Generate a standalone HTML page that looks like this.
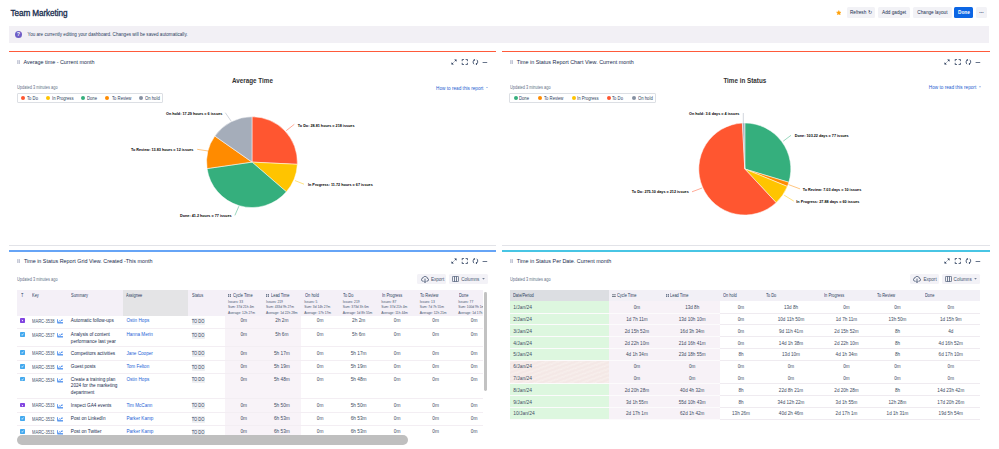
<!DOCTYPE html>
<html><head><meta charset="utf-8">
<style>
*{box-sizing:border-box}
html,body{margin:0;padding:0}
body{width:999px;height:449px;overflow:hidden;background:#fff;position:relative;font-family:"Liberation Sans",sans-serif;color:#172B4D}
.a{position:absolute;white-space:nowrap;line-height:1}
.r{position:absolute}
.btn{position:absolute;background:#F2F2F6;border-radius:1.5px;color:#172B4D;font-size:4.7px;line-height:11px;text-align:center}
.lg{position:absolute;border:0.6px solid #DCDFE4;border-radius:1px;height:9.8px;top:93px;background:#fff}
.lg span{position:absolute;top:2.5px;font-size:4.5px;line-height:1;color:#2C3E5D;transform:scaleX(0.934);transform-origin:0 0}
.dot{position:absolute;width:4.2px;height:4.2px;border-radius:50%;top:2.2px}
</style></head>
<body>
<div class="a" style="left:10.50px;top:10.00px;font-size:8.2px;color:#172B4D;font-weight:400;letter-spacing:-0.1px;-webkit-text-stroke:0.3px #172B4D">Team Marketing</div>
<svg class="a" style="left:835.7px;top:9.6px" width="5.6" height="5.6" viewBox="0 0 24 24"><path d="M12 2.5l2.9 6.2 6.8.8-5 4.7 1.3 6.7L12 17.6l-6 3.3 1.3-6.7-5-4.7 6.8-.8z" fill="#FFA20C" stroke="#FFA20C" stroke-width="2.2" stroke-linejoin="round"/></svg>
<div class="btn" style="left:846.5px;top:7px;width:28.5px;height:11px">Refresh &#x21bb;</div>
<div class="btn" style="left:877.7px;top:7px;width:32.8px;height:11px">Add gadget</div>
<div class="btn" style="left:913px;top:7px;width:38.8px;height:11px">Change layout</div>
<div class="btn" style="left:954.4px;top:7px;width:19.1px;height:11px;background:#0C66E4;color:#fff;font-weight:bold">Done</div>
<div class="btn" style="left:976.2px;top:7px;width:10.7px;height:11px;font-weight:bold">&middot;&middot;&middot;</div>
<div class="r" style="left:9px;top:26px;width:980px;height:17px;background:#F2F0F5"></div>
<div class="a" style="left:14.7px;top:30.6px;width:7.4px;height:7.4px;border-radius:50%;background:#6E5DC6;color:#fff;font-size:5.5px;font-weight:bold;text-align:center;line-height:7.6px">?</div>
<div class="a" style="left:27.50px;top:33.00px;font-size:4.6px;color:#2C3E5D;font-weight:400;">You are currently editing your dashboard. Changes will be saved automatically.</div>
<div class="r" style="left:9px;top:50.7px;width:487px;height:1.6px;background:#FF5A3A"></div>
<div class="r" style="left:502px;top:50.7px;width:488px;height:1.6px;background:#FF5A3A"></div>
<div class="r" style="left:9px;top:244.9px;width:487px;height:0.6px;background:#E2E3E8"></div>
<div class="r" style="left:502px;top:244.9px;width:488px;height:0.6px;background:#E2E3E8"></div>
<div class="r" style="left:9px;top:249.9px;width:487px;height:2px;background:#66A4F6"></div>
<div class="r" style="left:502px;top:249.9px;width:488px;height:2px;background:#48C5E4"></div>
<svg class="a" style="left:16.90px;top:59.70px" width="3.2" height="4.4" viewBox="0 0 3.2 4.4"><rect x="0" y="0" width="3.2" height="4.4" fill="#E3E4EC"/><rect x="0.3" y="0.2" width="0.9" height="4" fill="#BEC2D2"/><rect x="2" y="0.2" width="0.9" height="4" fill="#BEC2D2"/></svg>
<div class="a" style="left:23.50px;top:60.00px;font-size:5.4px;color:#172B4D;font-weight:400;">Average time - Current month</div>
<svg class="a" style="left:451.00px;top:59.00px" width="40" height="6" viewBox="0 0 40 6"><path d="M0.4,5.6 L0.6,3.2 L2.8,5.4 Z M5.6,0.4 L5.4,2.8 L3.2,0.6 Z" fill="#172B4D"/><path d="M1.6,4.4 L2.4,3.6 M3.6,2.4 L4.4,1.6" stroke="#172B4D" stroke-width="0.7" fill="none"/><g stroke="#172B4D" stroke-width="0.75" fill="none"><path d="M11.200000000000001,2.2 L11.200000000000001,0.4 L13.0,0.4 M14.600000000000001,0.4 L16.4,0.4 L16.4,2.2 M16.4,3.8 L16.4,5.6 L14.600000000000001,5.6 M13.0,5.6 L11.200000000000001,5.6 L11.200000000000001,3.8"/></g><g stroke="#172B4D" stroke-width="0.75" fill="none"><path d="M23.599999999999998,0.8 C21.799999999999997,1.2 21.599999999999998,4.2 23.0,5.2 M25.2,5.2 C27.0,4.8 27.2,1.8 25.799999999999997,0.8"/></g><path d="M22.799999999999997,0 L24.299999999999997,0.9 L22.799999999999997,1.9 Z M26.0,4.1 L24.5,5.1 L26.0,6 Z" fill="#172B4D"/><path d="M31.6,3.1 h4.6 v0.65 h-4.6 Z" fill="#172B4D"/></svg>
<div class="a" style="left:17.10px;top:86.00px;font-size:4.5px;color:#626F86;font-weight:400;;transform:scaleX(0.873);transform-origin:0 0">Updated 3 minutes ago</div>
<div class="lg" style="left:17px;width:145.8px">
  <i class="dot" style="left:2.9px;background:#FF5630"></i><span style="left:8.6px">To Do</span>
  <i class="dot" style="left:27.6px;background:#FFC400"></i><span style="left:34px">In Progress</span>
  <i class="dot" style="left:63px;background:#35AF7D"></i><span style="left:69.4px">Done</span>
  <i class="dot" style="left:87px;background:#FF8B00"></i><span style="left:93.5px">To Review</span>
  <i class="dot" style="left:120.9px;background:#8590A2"></i><span style="left:127.1px">On hold</span>
</div>
<div class="a" style="left:436.00px;top:87.00px;font-size:4.7px;color:#1D5DD0;font-weight:400;">How to read this report</div>
<svg class="a" style="left:486.2px;top:86.6px" width="2" height="1.6" viewBox="0 0 2 1.6"><path d="M0.2,0.3 L1,1.2 L1.8,0.3" fill="none" stroke="#1D5DD0" stroke-width="0.5"/></svg>
<div class="a" style="left:232.00px;top:78.00px;font-size:6.3px;color:#333;font-weight:bold;">Average Time</div>
<svg class="a" style="left:509.90px;top:59.70px" width="3.2" height="4.4" viewBox="0 0 3.2 4.4"><rect x="0" y="0" width="3.2" height="4.4" fill="#E3E4EC"/><rect x="0.3" y="0.2" width="0.9" height="4" fill="#BEC2D2"/><rect x="2" y="0.2" width="0.9" height="4" fill="#BEC2D2"/></svg>
<div class="a" style="left:516.80px;top:60.00px;font-size:5.4px;color:#172B4D;font-weight:400;">Time in Status Report Chart View. Current month</div>
<svg class="a" style="left:944.00px;top:59.00px" width="40" height="6" viewBox="0 0 40 6"><path d="M0.4,5.6 L0.6,3.2 L2.8,5.4 Z M5.6,0.4 L5.4,2.8 L3.2,0.6 Z" fill="#172B4D"/><path d="M1.6,4.4 L2.4,3.6 M3.6,2.4 L4.4,1.6" stroke="#172B4D" stroke-width="0.7" fill="none"/><g stroke="#172B4D" stroke-width="0.75" fill="none"><path d="M11.200000000000001,2.2 L11.200000000000001,0.4 L13.0,0.4 M14.600000000000001,0.4 L16.4,0.4 L16.4,2.2 M16.4,3.8 L16.4,5.6 L14.600000000000001,5.6 M13.0,5.6 L11.200000000000001,5.6 L11.200000000000001,3.8"/></g><g stroke="#172B4D" stroke-width="0.75" fill="none"><path d="M23.599999999999998,0.8 C21.799999999999997,1.2 21.599999999999998,4.2 23.0,5.2 M25.2,5.2 C27.0,4.8 27.2,1.8 25.799999999999997,0.8"/></g><path d="M22.799999999999997,0 L24.299999999999997,0.9 L22.799999999999997,1.9 Z M26.0,4.1 L24.5,5.1 L26.0,6 Z" fill="#172B4D"/><path d="M31.6,3.1 h4.6 v0.65 h-4.6 Z" fill="#172B4D"/></svg>
<div class="a" style="left:509.60px;top:86.00px;font-size:4.5px;color:#626F86;font-weight:400;;transform:scaleX(0.873);transform-origin:0 0">Updated 3 minutes ago</div>
<div class="lg" style="left:509.3px;width:146.5px">
  <i class="dot" style="left:3.5px;background:#35AF7D"></i><span style="left:9.2px">Done</span>
  <i class="dot" style="left:27.5px;background:#FF8B00"></i><span style="left:33.3px">To Review</span>
  <i class="dot" style="left:61.5px;background:#FFC400"></i><span style="left:67px">In Progress</span>
  <i class="dot" style="left:96.5px;background:#FF5630"></i><span style="left:102px">To Do</span>
  <i class="dot" style="left:121.9px;background:#8590A2"></i><span style="left:128px">On hold</span>
</div>
<div class="a" style="left:928.80px;top:86.00px;font-size:4.7px;color:#1D5DD0;font-weight:400;">How to read this report</div>
<svg class="a" style="left:979px;top:86.4px" width="2" height="1.6" viewBox="0 0 2 1.6"><path d="M0.2,0.3 L1,1.2 L1.8,0.3" fill="none" stroke="#1D5DD0" stroke-width="0.5"/></svg>
<div class="a" style="left:723.40px;top:78.00px;font-size:6.3px;color:#333;font-weight:bold;">Time in Status</div>
<svg class="a" style="left:0;top:0" width="999" height="449"><g stroke="#fff" stroke-width="0.5" stroke-linejoin="round">
<path d="M252.0,162.1 L252.00,116.70 A45.4,45.4 0 0 1 297.35,164.32 Z" fill="#FF5630"/>
<path d="M252.0,162.1 L297.35,164.32 A45.4,45.4 0 0 1 286.37,191.77 Z" fill="#FFC400"/>
<path d="M252.0,162.1 L286.37,191.77 A45.4,45.4 0 0 1 207.06,168.58 Z" fill="#35AF7D"/>
<path d="M252.0,162.1 L207.06,168.58 A45.4,45.4 0 0 1 214.81,136.06 Z" fill="#FF8B00"/>
<path d="M252.0,162.1 L214.81,136.06 A45.4,45.4 0 0 1 252.00,116.70 Z" fill="#A5ADBA"/>
<path d="M744.8,169 L744.80,123.00 A46,46 0 0 1 788.84,182.30 Z" fill="#35AF7D"/>
<path d="M744.8,169 L788.84,182.30 A46,46 0 0 1 787.36,186.45 Z" fill="#FF8B00"/>
<path d="M744.8,169 L787.36,186.45 A46,46 0 0 1 776.17,202.64 Z" fill="#FFC400"/>
<path d="M744.8,169 L776.17,202.64 A46,46 0 1 1 742.39,123.06 Z" fill="#FF5630"/>
<path d="M744.8,169 L742.39,123.06 A46,46 0 0 1 744.80,123.00 Z" fill="#A5ADBA"/>
</g><g fill="none" stroke-width="0.5">
<path d="M225.3,112.7 L231.2,121.2" stroke="#A5ADBA"/>
<path d="M294.3,124.3 L286.2,130.7" stroke="#FF5630"/>
<path d="M295,180.6 L304,184.2" stroke="#FFC400"/>
<path d="M234.9,215.4 L238.9,206.2" stroke="#35AF7D"/>
<path d="M197.2,149.3 L208.2,151" stroke="#FF8B00"/>
<path d="M743.3,113 L743.3,123.5" stroke="#A5ADBA"/>
<path d="M791,135.3 L783.2,141.2" stroke="#35AF7D"/>
<path d="M800.1,188.9 L788.5,184.6" stroke="#FF8B00"/>
<path d="M793.8,201.1 L784.2,195.2" stroke="#FFC400"/>
<path d="M692,191.8 L702.1,188" stroke="#FF5630"/>
</g></svg>
<div class="a" style="left:166.00px;top:113.00px;font-size:3.75px;color:#000;font-weight:bold;">On hold: 17.29 hours = 6 issues</div>
<div class="a" style="left:297.80px;top:125.00px;font-size:3.75px;color:#000;font-weight:bold;">To Do: 28.81 hours = 218 issues</div>
<div class="a" style="left:308.00px;top:184.00px;font-size:3.75px;color:#000;font-weight:bold;">In Progress: 11.72 hours = 67 issues</div>
<div class="a" style="left:180.00px;top:215.00px;font-size:3.75px;color:#000;font-weight:bold;">Done: 41.2 hours = 77 issues</div>
<div class="a" style="left:130.90px;top:149.00px;font-size:3.75px;color:#000;font-weight:bold;">To Review: 13.83 hours = 12 issues</div>
<div class="a" style="left:689.00px;top:113.00px;font-size:3.75px;color:#000;font-weight:bold;">On hold: 3.6 days = 4 issues</div>
<div class="a" style="left:794.80px;top:135.00px;font-size:3.75px;color:#000;font-weight:bold;">Done: 103.22 days = 77 issues</div>
<div class="a" style="left:802.70px;top:189.00px;font-size:3.75px;color:#000;font-weight:bold;">To Review: 7.03 days = 10 issues</div>
<div class="a" style="left:796.30px;top:201.00px;font-size:3.75px;color:#000;font-weight:bold;">In Progress: 27.88 days = 60 issues</div>
<div class="a" style="left:631.80px;top:191.00px;font-size:3.75px;color:#000;font-weight:bold;">To Do: 275.10 days = 212 issues</div>
<svg class="a" style="left:17.20px;top:259.00px" width="3.2" height="4.4" viewBox="0 0 3.2 4.4"><rect x="0" y="0" width="3.2" height="4.4" fill="#E3E4EC"/><rect x="0.3" y="0.2" width="0.9" height="4" fill="#BEC2D2"/><rect x="2" y="0.2" width="0.9" height="4" fill="#BEC2D2"/></svg>
<div class="a" style="left:23.90px;top:259.00px;font-size:5.4px;color:#172B4D;font-weight:400;">Time in Status Report Grid View. Created -This month</div>
<svg class="a" style="left:451.00px;top:258.10px" width="40" height="6" viewBox="0 0 40 6"><path d="M0.4,5.6 L0.6,3.2 L2.8,5.4 Z M5.6,0.4 L5.4,2.8 L3.2,0.6 Z" fill="#172B4D"/><path d="M1.6,4.4 L2.4,3.6 M3.6,2.4 L4.4,1.6" stroke="#172B4D" stroke-width="0.7" fill="none"/><g stroke="#172B4D" stroke-width="0.75" fill="none"><path d="M11.200000000000001,2.2 L11.200000000000001,0.4 L13.0,0.4 M14.600000000000001,0.4 L16.4,0.4 L16.4,2.2 M16.4,3.8 L16.4,5.6 L14.600000000000001,5.6 M13.0,5.6 L11.200000000000001,5.6 L11.200000000000001,3.8"/></g><g stroke="#172B4D" stroke-width="0.75" fill="none"><path d="M23.599999999999998,0.8 C21.799999999999997,1.2 21.599999999999998,4.2 23.0,5.2 M25.2,5.2 C27.0,4.8 27.2,1.8 25.799999999999997,0.8"/></g><path d="M22.799999999999997,0 L24.299999999999997,0.9 L22.799999999999997,1.9 Z M26.0,4.1 L24.5,5.1 L26.0,6 Z" fill="#172B4D"/><path d="M31.6,3.1 h4.6 v0.65 h-4.6 Z" fill="#172B4D"/></svg>
<div class="a" style="left:17.10px;top:278.00px;font-size:4.5px;color:#626F86;font-weight:400;;transform:scaleX(0.873);transform-origin:0 0">Updated 3 minutes ago</div>
<div class="r" style="left:417.3px;top:274px;width:28.7px;height:10.4px;background:#F3F2F7;border-radius:1.5px"></div><div class="r" style="left:449.3px;top:274px;width:38.4px;height:10.4px;background:#F3F2F7;border-radius:1.5px"></div><svg class="a" style="left:420.90px;top:275.80px" width="8" height="7" viewBox="0 0 8 7"><path d="M2.4,5.1 H1.9 C1,5.1 0.4,4.4 0.4,3.6 C0.4,2.8 1,2.1 1.9,2.1 C2.2,1 3,0.4 4.1,0.4 C5.3,0.4 6.2,1.2 6.3,2.3 C7.1,2.4 7.6,3 7.6,3.7 C7.6,4.5 7,5.1 6.2,5.1 H5.7" fill="none" stroke="#2C3E5D" stroke-width="0.75"/><path d="M4,2.6 V6.5 M2.9,5.4 L4,6.5 L5.1,5.4" fill="none" stroke="#2C3E5D" stroke-width="0.75"/></svg><div class="a" style="left:430.90px;top:278.00px;font-size:4.6px;color:#44546F;font-weight:400;">Export</div><svg class="a" style="left:452.10px;top:276.30px" width="7" height="6" viewBox="0 0 7 6"><rect x="0.4" y="0.4" width="6.2" height="5.2" rx="0.8" fill="none" stroke="#44546F" stroke-width="0.75"/><path d="M2.5,0.5 V5.5 M4.5,0.5 V5.5" stroke="#44546F" stroke-width="0.75"/></svg><div class="a" style="left:461.20px;top:278.00px;font-size:4.6px;color:#44546F;font-weight:400;">Columns</div><svg class="a" style="left:482.10px;top:278.00px" width="3" height="2" viewBox="0 0 3 2"><path d="M0.2,0.2 L1.5,1.6 L2.8,0.2 Z" fill="#44546F"/></svg>
<div class="r" style="left:17px;top:290px;width:465.8px;height:25.80000000000001px;background:#F4F0F7"></div>
<div class="r" style="left:123.3px;top:290px;width:65px;height:25.80000000000001px;background:#E4E4E6"></div>
<div class="r" style="left:224.7px;top:315.8px;width:76.2px;height:124.19999999999999px;background:#F8F3F8"></div>
<div class="r" style="left:17px;top:328.10px;width:465.8px;height:0.7px;background:#F3EEF3"></div>
<div class="r" style="left:17px;top:346.00px;width:465.8px;height:0.7px;background:#F3EEF3"></div>
<div class="r" style="left:17px;top:359.80px;width:465.8px;height:0.7px;background:#F3EEF3"></div>
<div class="r" style="left:17px;top:373.20px;width:465.8px;height:0.7px;background:#F3EEF3"></div>
<div class="r" style="left:17px;top:398.10px;width:465.8px;height:0.7px;background:#F3EEF3"></div>
<div class="r" style="left:17px;top:412.20px;width:465.8px;height:0.7px;background:#F3EEF3"></div>
<div class="r" style="left:17px;top:425.20px;width:465.8px;height:0.7px;background:#F3EEF3"></div>
<div class="a" style="left:21.00px;top:294.00px;font-size:4.5px;color:#2C3E5D;font-weight:400;;transform:scaleX(0.88);transform-origin:0 0">T</div>
<div class="a" style="left:32.10px;top:294.00px;font-size:4.5px;color:#2C3E5D;font-weight:400;;transform:scaleX(0.88);transform-origin:0 0">Key</div>
<div class="a" style="left:70.90px;top:294.00px;font-size:4.5px;color:#2C3E5D;font-weight:400;;transform:scaleX(0.88);transform-origin:0 0">Summary</div>
<div class="a" style="left:126.40px;top:294.00px;font-size:4.5px;color:#2C3E5D;font-weight:400;;transform:scaleX(0.88);transform-origin:0 0">Assignee</div>
<div class="a" style="left:191.50px;top:294.00px;font-size:4.5px;color:#2C3E5D;font-weight:400;;transform:scaleX(0.88);transform-origin:0 0">Status</div>
<svg class="a" style="left:228.00px;top:293.70px" width="3.4" height="3" viewBox="0 0 3.4 3"><path d="M0,0.2 h1.3 v1.1 h-1.3 Z M2,0.2 h1.3 v1.1 h-1.3 Z M0,1.7 h1.3 v1.1 h-1.3 Z M2,1.7 h1.3 v1.1 h-1.3 Z" fill="#44546F"/></svg>
<div class="a" style="left:232.50px;top:294.00px;font-size:4.5px;color:#2C3E5D;font-weight:400;;transform:scaleX(0.88);transform-origin:0 0">Cycle Time</div>
<div class="a" style="left:228.00px;top:301.00px;font-size:3.3px;color:#44546F;font-weight:400;">Issues: 33</div>
<div class="a" style="left:228.00px;top:306.00px;font-size:3.3px;color:#44546F;font-weight:400;">Sum: 37d 21h 4m</div>
<div class="a" style="left:228.00px;top:312.00px;font-size:3.3px;color:#44546F;font-weight:400;">Average: 12h 27m</div>
<svg class="a" style="left:266.10px;top:293.70px" width="3.4" height="3" viewBox="0 0 3.4 3"><path d="M0,0.2 h1.3 v1.1 h-1.3 Z M2,0.2 h1.3 v1.1 h-1.3 Z M0,1.7 h1.3 v1.1 h-1.3 Z M2,1.7 h1.3 v1.1 h-1.3 Z" fill="#44546F"/></svg>
<div class="a" style="left:270.60px;top:294.00px;font-size:4.5px;color:#2C3E5D;font-weight:400;;transform:scaleX(0.88);transform-origin:0 0">Lead Time</div>
<div class="a" style="left:266.10px;top:301.00px;font-size:3.3px;color:#44546F;font-weight:400;">Issues: 219</div>
<div class="a" style="left:266.10px;top:306.00px;font-size:3.3px;color:#44546F;font-weight:400;">Sum: 433d 9h 27m</div>
<div class="a" style="left:266.10px;top:312.00px;font-size:3.3px;color:#44546F;font-weight:400;">Average: 1d 22h 28m</div>
<div class="a" style="left:304.90px;top:294.00px;font-size:4.5px;color:#2C3E5D;font-weight:400;;transform:scaleX(0.88);transform-origin:0 0">On hold</div>
<div class="a" style="left:304.20px;top:301.00px;font-size:3.3px;color:#44546F;font-weight:400;">Issues: 5</div>
<div class="a" style="left:304.20px;top:306.00px;font-size:3.3px;color:#44546F;font-weight:400;">Sum: 3d 14h 27m</div>
<div class="a" style="left:304.20px;top:312.00px;font-size:3.3px;color:#44546F;font-weight:400;">Average: 17h 17m</div>
<div class="a" style="left:343.40px;top:294.00px;font-size:4.5px;color:#2C3E5D;font-weight:400;;transform:scaleX(0.88);transform-origin:0 0">To Do</div>
<div class="a" style="left:342.70px;top:301.00px;font-size:3.3px;color:#44546F;font-weight:400;">Issues: 219</div>
<div class="a" style="left:342.70px;top:306.00px;font-size:3.3px;color:#44546F;font-weight:400;">Sum: 373d 3h 6m</div>
<div class="a" style="left:342.70px;top:312.00px;font-size:3.3px;color:#44546F;font-weight:400;">Average: 1d 8h 55m</div>
<div class="a" style="left:381.90px;top:294.00px;font-size:4.5px;color:#2C3E5D;font-weight:400;;transform:scaleX(0.88);transform-origin:0 0">In Progress</div>
<div class="a" style="left:381.20px;top:301.00px;font-size:3.3px;color:#44546F;font-weight:400;">Issues: 87</div>
<div class="a" style="left:381.20px;top:306.00px;font-size:3.3px;color:#44546F;font-weight:400;">Sum: 37d 21h 4m</div>
<div class="a" style="left:381.20px;top:312.00px;font-size:3.3px;color:#44546F;font-weight:400;">Average: 11h 44m</div>
<div class="a" style="left:420.40px;top:294.00px;font-size:4.5px;color:#2C3E5D;font-weight:400;;transform:scaleX(0.88);transform-origin:0 0">To Review</div>
<div class="a" style="left:419.70px;top:301.00px;font-size:3.3px;color:#44546F;font-weight:400;">Issues: 13</div>
<div class="a" style="left:419.70px;top:306.00px;font-size:3.3px;color:#44546F;font-weight:400;">Sum: 7d 7h 55m</div>
<div class="a" style="left:419.70px;top:312.00px;font-size:3.3px;color:#44546F;font-weight:400;">Average: 12h 21m</div>
<div class="a" style="left:458.90px;top:294.00px;font-size:4.5px;color:#2C3E5D;font-weight:400;;transform:scaleX(0.88);transform-origin:0 0">Done</div>
<div class="a" style="left:458.20px;top:301.00px;font-size:3.3px;color:#44546F;font-weight:400;">Issues: 77</div>
<div class="a" style="left:458.20px;top:306.00px;font-size:3.3px;color:#44546F;font-weight:400;">Sum: 100d 9h 1m</div>
<div class="a" style="left:458.20px;top:312.00px;font-size:3.3px;color:#44546F;font-weight:400;">Average: 1d 17h 3m</div>
<div class="r" style="left:20.3px;top:317.90px;width:4.8px;height:4.8px;border-radius:0.8px;background:#8043E0"></div>
<svg class="a" style="left:20.3px;top:317.90px" width="4.8" height="4.8" viewBox="0 0 4.8 4.8"><path d="M1.7,1.4 L3.2,2.6 L2.2,3.4 Z" fill="#fff"/></svg>
<div class="a" style="left:32.20px;top:320.00px;font-size:4.6px;color:#44546F;font-weight:400;;transform:scaleX(0.89);transform-origin:0 0">MARC-3538</div>
<svg class="a" style="left:57px;top:318.90px" width="6.2" height="5" viewBox="0 0 6.2 5"><path d="M0.4,0.2 V3.6 H6" fill="none" stroke="#1D6FE8" stroke-width="0.75"/><path d="M0.4,4.5 H6" fill="none" stroke="#5E9CF0" stroke-width="0.5"/><path d="M1.4,2.9 L2.8,1.7 L3.7,2.2 L5.1,1" fill="none" stroke="#1D6FE8" stroke-width="0.7"/><path d="M4.2,0.7 L5.7,0.4 L5.4,1.9 Z" fill="#1D6FE8"/></svg>
<div class="a" style="left:70.80px;top:319.00px;font-size:4.68px;color:#172B4D;font-weight:400;">Automatic follow-ups</div>
<div class="a" style="left:126.40px;top:319.00px;font-size:4.63px;color:#1D5FD6;font-weight:400;">Ostin Hops</div>
<div class="r" style="left:191.5px;top:317.80px;width:13.1px;height:6.9px;background:#EEEFF2;border-radius:0.8px"></div>
<div class="a" style="left:148.05px;width:100px;text-align:center;top:320.00px;font-size:4.7px;color:#2C3E5D;font-weight:400;;transform:scaleX(0.86);transform-origin:50% 0">TO DO</div>
<div class="a" style="left:193.75px;width:100px;text-align:center;top:319.00px;font-size:4.75px;color:#3D4B63;font-weight:400;">0m</div>
<div class="a" style="left:231.85px;width:100px;text-align:center;top:319.00px;font-size:4.75px;color:#3D4B63;font-weight:400;">2h 2m</div>
<div class="a" style="left:270.15px;width:100px;text-align:center;top:319.00px;font-size:4.75px;color:#3D4B63;font-weight:400;">0m</div>
<div class="a" style="left:308.65px;width:100px;text-align:center;top:319.00px;font-size:4.75px;color:#3D4B63;font-weight:400;">2h 2m</div>
<div class="a" style="left:347.15px;width:100px;text-align:center;top:319.00px;font-size:4.75px;color:#3D4B63;font-weight:400;">0m</div>
<div class="a" style="left:385.65px;width:100px;text-align:center;top:319.00px;font-size:4.75px;color:#3D4B63;font-weight:400;">0m</div>
<div class="a" style="left:424.15px;width:100px;text-align:center;top:319.00px;font-size:4.75px;color:#3D4B63;font-weight:400;">0m</div>
<div class="r" style="left:20.3px;top:332.10px;width:4.8px;height:4.8px;border-radius:0.8px;background:#42A8EE"></div>
<svg class="a" style="left:20.3px;top:332.10px" width="4.8" height="4.8" viewBox="0 0 4.8 4.8"><path d="M1.4,2.6 L2.1,3.3 L3.5,1.6" fill="none" stroke="#fff" stroke-width="0.7"/></svg>
<div class="a" style="left:32.20px;top:334.00px;font-size:4.6px;color:#44546F;font-weight:400;;transform:scaleX(0.89);transform-origin:0 0">MARC-3537</div>
<svg class="a" style="left:57px;top:333.10px" width="6.2" height="5" viewBox="0 0 6.2 5"><path d="M0.4,0.2 V3.6 H6" fill="none" stroke="#1D6FE8" stroke-width="0.75"/><path d="M0.4,4.5 H6" fill="none" stroke="#5E9CF0" stroke-width="0.5"/><path d="M1.4,2.9 L2.8,1.7 L3.7,2.2 L5.1,1" fill="none" stroke="#1D6FE8" stroke-width="0.7"/><path d="M4.2,0.7 L5.7,0.4 L5.4,1.9 Z" fill="#1D6FE8"/></svg>
<div class="a" style="left:70.80px;top:333.00px;font-size:4.68px;color:#172B4D;font-weight:400;">Analysis of content</div>
<div class="a" style="left:70.80px;top:340.00px;font-size:4.68px;color:#172B4D;font-weight:400;">performance last year</div>
<div class="a" style="left:126.40px;top:333.00px;font-size:4.63px;color:#1D5FD6;font-weight:400;">Hanna Merin</div>
<div class="r" style="left:191.5px;top:332.00px;width:13.1px;height:6.9px;background:#EEEFF2;border-radius:0.8px"></div>
<div class="a" style="left:148.05px;width:100px;text-align:center;top:334.00px;font-size:4.7px;color:#2C3E5D;font-weight:400;;transform:scaleX(0.86);transform-origin:50% 0">TO DO</div>
<div class="a" style="left:193.75px;width:100px;text-align:center;top:333.00px;font-size:4.75px;color:#3D4B63;font-weight:400;">0m</div>
<div class="a" style="left:231.85px;width:100px;text-align:center;top:333.00px;font-size:4.75px;color:#3D4B63;font-weight:400;">5h 6m</div>
<div class="a" style="left:270.15px;width:100px;text-align:center;top:333.00px;font-size:4.75px;color:#3D4B63;font-weight:400;">0m</div>
<div class="a" style="left:308.65px;width:100px;text-align:center;top:333.00px;font-size:4.75px;color:#3D4B63;font-weight:400;">5h 6m</div>
<div class="a" style="left:347.15px;width:100px;text-align:center;top:333.00px;font-size:4.75px;color:#3D4B63;font-weight:400;">0m</div>
<div class="a" style="left:385.65px;width:100px;text-align:center;top:333.00px;font-size:4.75px;color:#3D4B63;font-weight:400;">0m</div>
<div class="a" style="left:424.15px;width:100px;text-align:center;top:333.00px;font-size:4.75px;color:#3D4B63;font-weight:400;">0m</div>
<div class="r" style="left:20.3px;top:350.30px;width:4.8px;height:4.8px;border-radius:0.8px;background:#42A8EE"></div>
<svg class="a" style="left:20.3px;top:350.30px" width="4.8" height="4.8" viewBox="0 0 4.8 4.8"><path d="M1.4,2.6 L2.1,3.3 L3.5,1.6" fill="none" stroke="#fff" stroke-width="0.7"/></svg>
<div class="a" style="left:32.20px;top:352.00px;font-size:4.6px;color:#44546F;font-weight:400;;transform:scaleX(0.89);transform-origin:0 0">MARC-3536</div>
<svg class="a" style="left:57px;top:351.30px" width="6.2" height="5" viewBox="0 0 6.2 5"><path d="M0.4,0.2 V3.6 H6" fill="none" stroke="#1D6FE8" stroke-width="0.75"/><path d="M0.4,4.5 H6" fill="none" stroke="#5E9CF0" stroke-width="0.5"/><path d="M1.4,2.9 L2.8,1.7 L3.7,2.2 L5.1,1" fill="none" stroke="#1D6FE8" stroke-width="0.7"/><path d="M4.2,0.7 L5.7,0.4 L5.4,1.9 Z" fill="#1D6FE8"/></svg>
<div class="a" style="left:70.80px;top:352.00px;font-size:4.68px;color:#172B4D;font-weight:400;">Competitors activities</div>
<div class="a" style="left:126.40px;top:352.00px;font-size:4.63px;color:#1D5FD6;font-weight:400;">Jane Cooper</div>
<div class="r" style="left:191.5px;top:350.20px;width:13.1px;height:6.9px;background:#EEEFF2;border-radius:0.8px"></div>
<div class="a" style="left:148.05px;width:100px;text-align:center;top:352.00px;font-size:4.7px;color:#2C3E5D;font-weight:400;;transform:scaleX(0.86);transform-origin:50% 0">TO DO</div>
<div class="a" style="left:193.75px;width:100px;text-align:center;top:352.00px;font-size:4.75px;color:#3D4B63;font-weight:400;">0m</div>
<div class="a" style="left:231.85px;width:100px;text-align:center;top:352.00px;font-size:4.75px;color:#3D4B63;font-weight:400;">5h 17m</div>
<div class="a" style="left:270.15px;width:100px;text-align:center;top:352.00px;font-size:4.75px;color:#3D4B63;font-weight:400;">0m</div>
<div class="a" style="left:308.65px;width:100px;text-align:center;top:352.00px;font-size:4.75px;color:#3D4B63;font-weight:400;">5h 17m</div>
<div class="a" style="left:347.15px;width:100px;text-align:center;top:352.00px;font-size:4.75px;color:#3D4B63;font-weight:400;">0m</div>
<div class="a" style="left:385.65px;width:100px;text-align:center;top:352.00px;font-size:4.75px;color:#3D4B63;font-weight:400;">0m</div>
<div class="a" style="left:424.15px;width:100px;text-align:center;top:352.00px;font-size:4.75px;color:#3D4B63;font-weight:400;">0m</div>
<div class="r" style="left:20.3px;top:363.90px;width:4.8px;height:4.8px;border-radius:0.8px;background:#42A8EE"></div>
<svg class="a" style="left:20.3px;top:363.90px" width="4.8" height="4.8" viewBox="0 0 4.8 4.8"><path d="M1.4,2.6 L2.1,3.3 L3.5,1.6" fill="none" stroke="#fff" stroke-width="0.7"/></svg>
<div class="a" style="left:32.20px;top:366.00px;font-size:4.6px;color:#44546F;font-weight:400;;transform:scaleX(0.89);transform-origin:0 0">MARC-3535</div>
<svg class="a" style="left:57px;top:364.90px" width="6.2" height="5" viewBox="0 0 6.2 5"><path d="M0.4,0.2 V3.6 H6" fill="none" stroke="#1D6FE8" stroke-width="0.75"/><path d="M0.4,4.5 H6" fill="none" stroke="#5E9CF0" stroke-width="0.5"/><path d="M1.4,2.9 L2.8,1.7 L3.7,2.2 L5.1,1" fill="none" stroke="#1D6FE8" stroke-width="0.7"/><path d="M4.2,0.7 L5.7,0.4 L5.4,1.9 Z" fill="#1D6FE8"/></svg>
<div class="a" style="left:70.80px;top:365.00px;font-size:4.68px;color:#172B4D;font-weight:400;">Guest posts</div>
<div class="a" style="left:126.40px;top:365.00px;font-size:4.63px;color:#1D5FD6;font-weight:400;">Tom Felton</div>
<div class="r" style="left:191.5px;top:363.80px;width:13.1px;height:6.9px;background:#EEEFF2;border-radius:0.8px"></div>
<div class="a" style="left:148.05px;width:100px;text-align:center;top:366.00px;font-size:4.7px;color:#2C3E5D;font-weight:400;;transform:scaleX(0.86);transform-origin:50% 0">TO DO</div>
<div class="a" style="left:193.75px;width:100px;text-align:center;top:365.00px;font-size:4.75px;color:#3D4B63;font-weight:400;">0m</div>
<div class="a" style="left:231.85px;width:100px;text-align:center;top:365.00px;font-size:4.75px;color:#3D4B63;font-weight:400;">5h 19m</div>
<div class="a" style="left:270.15px;width:100px;text-align:center;top:365.00px;font-size:4.75px;color:#3D4B63;font-weight:400;">0m</div>
<div class="a" style="left:308.65px;width:100px;text-align:center;top:365.00px;font-size:4.75px;color:#3D4B63;font-weight:400;">5h 19m</div>
<div class="a" style="left:347.15px;width:100px;text-align:center;top:365.00px;font-size:4.75px;color:#3D4B63;font-weight:400;">0m</div>
<div class="a" style="left:385.65px;width:100px;text-align:center;top:365.00px;font-size:4.75px;color:#3D4B63;font-weight:400;">0m</div>
<div class="a" style="left:424.15px;width:100px;text-align:center;top:365.00px;font-size:4.75px;color:#3D4B63;font-weight:400;">0m</div>
<div class="r" style="left:20.3px;top:376.70px;width:4.8px;height:4.8px;border-radius:0.8px;background:#42A8EE"></div>
<svg class="a" style="left:20.3px;top:376.70px" width="4.8" height="4.8" viewBox="0 0 4.8 4.8"><path d="M1.4,2.6 L2.1,3.3 L3.5,1.6" fill="none" stroke="#fff" stroke-width="0.7"/></svg>
<div class="a" style="left:32.20px;top:379.00px;font-size:4.6px;color:#44546F;font-weight:400;;transform:scaleX(0.89);transform-origin:0 0">MARC-3534</div>
<svg class="a" style="left:57px;top:377.70px" width="6.2" height="5" viewBox="0 0 6.2 5"><path d="M0.4,0.2 V3.6 H6" fill="none" stroke="#1D6FE8" stroke-width="0.75"/><path d="M0.4,4.5 H6" fill="none" stroke="#5E9CF0" stroke-width="0.5"/><path d="M1.4,2.9 L2.8,1.7 L3.7,2.2 L5.1,1" fill="none" stroke="#1D6FE8" stroke-width="0.7"/><path d="M4.2,0.7 L5.7,0.4 L5.4,1.9 Z" fill="#1D6FE8"/></svg>
<div class="a" style="left:70.80px;top:378.00px;font-size:4.68px;color:#172B4D;font-weight:400;">Create a training plan</div>
<div class="a" style="left:70.80px;top:384.00px;font-size:4.68px;color:#172B4D;font-weight:400;">2024 for the marketing</div>
<div class="a" style="left:70.80px;top:391.00px;font-size:4.68px;color:#172B4D;font-weight:400;">department</div>
<div class="a" style="left:126.40px;top:378.00px;font-size:4.63px;color:#1D5FD6;font-weight:400;">Ostin Hops</div>
<div class="r" style="left:191.5px;top:376.60px;width:13.1px;height:6.9px;background:#EEEFF2;border-radius:0.8px"></div>
<div class="a" style="left:148.05px;width:100px;text-align:center;top:378.00px;font-size:4.7px;color:#2C3E5D;font-weight:400;;transform:scaleX(0.86);transform-origin:50% 0">TO DO</div>
<div class="a" style="left:193.75px;width:100px;text-align:center;top:378.00px;font-size:4.75px;color:#3D4B63;font-weight:400;">0m</div>
<div class="a" style="left:231.85px;width:100px;text-align:center;top:378.00px;font-size:4.75px;color:#3D4B63;font-weight:400;">5h 48m</div>
<div class="a" style="left:270.15px;width:100px;text-align:center;top:378.00px;font-size:4.75px;color:#3D4B63;font-weight:400;">0m</div>
<div class="a" style="left:308.65px;width:100px;text-align:center;top:378.00px;font-size:4.75px;color:#3D4B63;font-weight:400;">5h 48m</div>
<div class="a" style="left:347.15px;width:100px;text-align:center;top:378.00px;font-size:4.75px;color:#3D4B63;font-weight:400;">0m</div>
<div class="a" style="left:385.65px;width:100px;text-align:center;top:378.00px;font-size:4.75px;color:#3D4B63;font-weight:400;">0m</div>
<div class="a" style="left:424.15px;width:100px;text-align:center;top:378.00px;font-size:4.75px;color:#3D4B63;font-weight:400;">0m</div>
<div class="r" style="left:20.3px;top:402.50px;width:4.8px;height:4.8px;border-radius:0.8px;background:#8043E0"></div>
<svg class="a" style="left:20.3px;top:402.50px" width="4.8" height="4.8" viewBox="0 0 4.8 4.8"><path d="M1.7,1.4 L3.2,2.6 L2.2,3.4 Z" fill="#fff"/></svg>
<div class="a" style="left:32.20px;top:404.00px;font-size:4.6px;color:#44546F;font-weight:400;;transform:scaleX(0.89);transform-origin:0 0">MARC-3533</div>
<svg class="a" style="left:57px;top:403.50px" width="6.2" height="5" viewBox="0 0 6.2 5"><path d="M0.4,0.2 V3.6 H6" fill="none" stroke="#1D6FE8" stroke-width="0.75"/><path d="M0.4,4.5 H6" fill="none" stroke="#5E9CF0" stroke-width="0.5"/><path d="M1.4,2.9 L2.8,1.7 L3.7,2.2 L5.1,1" fill="none" stroke="#1D6FE8" stroke-width="0.7"/><path d="M4.2,0.7 L5.7,0.4 L5.4,1.9 Z" fill="#1D6FE8"/></svg>
<div class="a" style="left:70.80px;top:404.00px;font-size:4.68px;color:#172B4D;font-weight:400;">Inspect GA4 events</div>
<div class="a" style="left:126.40px;top:404.00px;font-size:4.63px;color:#1D5FD6;font-weight:400;">Tim McCann</div>
<div class="r" style="left:191.5px;top:402.40px;width:13.1px;height:6.9px;background:#EEEFF2;border-radius:0.8px"></div>
<div class="a" style="left:148.05px;width:100px;text-align:center;top:404.00px;font-size:4.7px;color:#2C3E5D;font-weight:400;;transform:scaleX(0.86);transform-origin:50% 0">TO DO</div>
<div class="a" style="left:193.75px;width:100px;text-align:center;top:404.00px;font-size:4.75px;color:#3D4B63;font-weight:400;">0m</div>
<div class="a" style="left:231.85px;width:100px;text-align:center;top:404.00px;font-size:4.75px;color:#3D4B63;font-weight:400;">5h 50m</div>
<div class="a" style="left:270.15px;width:100px;text-align:center;top:404.00px;font-size:4.75px;color:#3D4B63;font-weight:400;">0m</div>
<div class="a" style="left:308.65px;width:100px;text-align:center;top:404.00px;font-size:4.75px;color:#3D4B63;font-weight:400;">5h 50m</div>
<div class="a" style="left:347.15px;width:100px;text-align:center;top:404.00px;font-size:4.75px;color:#3D4B63;font-weight:400;">0m</div>
<div class="a" style="left:385.65px;width:100px;text-align:center;top:404.00px;font-size:4.75px;color:#3D4B63;font-weight:400;">0m</div>
<div class="a" style="left:424.15px;width:100px;text-align:center;top:404.00px;font-size:4.75px;color:#3D4B63;font-weight:400;">0m</div>
<div class="r" style="left:20.3px;top:415.80px;width:4.8px;height:4.8px;border-radius:0.8px;background:#42A8EE"></div>
<svg class="a" style="left:20.3px;top:415.80px" width="4.8" height="4.8" viewBox="0 0 4.8 4.8"><path d="M1.4,2.6 L2.1,3.3 L3.5,1.6" fill="none" stroke="#fff" stroke-width="0.7"/></svg>
<div class="a" style="left:32.20px;top:418.00px;font-size:4.6px;color:#44546F;font-weight:400;;transform:scaleX(0.89);transform-origin:0 0">MARC-3532</div>
<svg class="a" style="left:57px;top:416.80px" width="6.2" height="5" viewBox="0 0 6.2 5"><path d="M0.4,0.2 V3.6 H6" fill="none" stroke="#1D6FE8" stroke-width="0.75"/><path d="M0.4,4.5 H6" fill="none" stroke="#5E9CF0" stroke-width="0.5"/><path d="M1.4,2.9 L2.8,1.7 L3.7,2.2 L5.1,1" fill="none" stroke="#1D6FE8" stroke-width="0.7"/><path d="M4.2,0.7 L5.7,0.4 L5.4,1.9 Z" fill="#1D6FE8"/></svg>
<div class="a" style="left:70.80px;top:417.00px;font-size:4.68px;color:#172B4D;font-weight:400;">Post on LinkedIn</div>
<div class="a" style="left:126.40px;top:417.00px;font-size:4.63px;color:#1D5FD6;font-weight:400;">Parker Kamp</div>
<div class="r" style="left:191.5px;top:415.70px;width:13.1px;height:6.9px;background:#EEEFF2;border-radius:0.8px"></div>
<div class="a" style="left:148.05px;width:100px;text-align:center;top:418.00px;font-size:4.7px;color:#2C3E5D;font-weight:400;;transform:scaleX(0.86);transform-origin:50% 0">TO DO</div>
<div class="a" style="left:193.75px;width:100px;text-align:center;top:417.00px;font-size:4.75px;color:#3D4B63;font-weight:400;">0m</div>
<div class="a" style="left:231.85px;width:100px;text-align:center;top:417.00px;font-size:4.75px;color:#3D4B63;font-weight:400;">6h 53m</div>
<div class="a" style="left:270.15px;width:100px;text-align:center;top:417.00px;font-size:4.75px;color:#3D4B63;font-weight:400;">0m</div>
<div class="a" style="left:308.65px;width:100px;text-align:center;top:417.00px;font-size:4.75px;color:#3D4B63;font-weight:400;">6h 53m</div>
<div class="a" style="left:347.15px;width:100px;text-align:center;top:417.00px;font-size:4.75px;color:#3D4B63;font-weight:400;">0m</div>
<div class="a" style="left:385.65px;width:100px;text-align:center;top:417.00px;font-size:4.75px;color:#3D4B63;font-weight:400;">0m</div>
<div class="a" style="left:424.15px;width:100px;text-align:center;top:417.00px;font-size:4.75px;color:#3D4B63;font-weight:400;">0m</div>
<div class="r" style="left:20.3px;top:429.10px;width:4.8px;height:4.8px;border-radius:0.8px;background:#42A8EE"></div>
<svg class="a" style="left:20.3px;top:429.10px" width="4.8" height="4.8" viewBox="0 0 4.8 4.8"><path d="M1.4,2.6 L2.1,3.3 L3.5,1.6" fill="none" stroke="#fff" stroke-width="0.7"/></svg>
<div class="a" style="left:32.20px;top:431.00px;font-size:4.6px;color:#44546F;font-weight:400;;transform:scaleX(0.89);transform-origin:0 0">MARC-3531</div>
<svg class="a" style="left:57px;top:430.10px" width="6.2" height="5" viewBox="0 0 6.2 5"><path d="M0.4,0.2 V3.6 H6" fill="none" stroke="#1D6FE8" stroke-width="0.75"/><path d="M0.4,4.5 H6" fill="none" stroke="#5E9CF0" stroke-width="0.5"/><path d="M1.4,2.9 L2.8,1.7 L3.7,2.2 L5.1,1" fill="none" stroke="#1D6FE8" stroke-width="0.7"/><path d="M4.2,0.7 L5.7,0.4 L5.4,1.9 Z" fill="#1D6FE8"/></svg>
<div class="a" style="left:70.80px;top:430.00px;font-size:4.68px;color:#172B4D;font-weight:400;">Post on Twitter</div>
<div class="a" style="left:126.40px;top:430.00px;font-size:4.63px;color:#1D5FD6;font-weight:400;">Parker Kamp</div>
<div class="r" style="left:191.5px;top:429.00px;width:13.1px;height:6.9px;background:#EEEFF2;border-radius:0.8px"></div>
<div class="a" style="left:148.05px;width:100px;text-align:center;top:431.00px;font-size:4.7px;color:#2C3E5D;font-weight:400;;transform:scaleX(0.86);transform-origin:50% 0">TO DO</div>
<div class="a" style="left:193.75px;width:100px;text-align:center;top:430.00px;font-size:4.75px;color:#3D4B63;font-weight:400;">0m</div>
<div class="a" style="left:231.85px;width:100px;text-align:center;top:430.00px;font-size:4.75px;color:#3D4B63;font-weight:400;">6h 53m</div>
<div class="a" style="left:270.15px;width:100px;text-align:center;top:430.00px;font-size:4.75px;color:#3D4B63;font-weight:400;">0m</div>
<div class="a" style="left:308.65px;width:100px;text-align:center;top:430.00px;font-size:4.75px;color:#3D4B63;font-weight:400;">6h 53m</div>
<div class="a" style="left:347.15px;width:100px;text-align:center;top:430.00px;font-size:4.75px;color:#3D4B63;font-weight:400;">0m</div>
<div class="a" style="left:385.65px;width:100px;text-align:center;top:430.00px;font-size:4.75px;color:#3D4B63;font-weight:400;">0m</div>
<div class="a" style="left:424.15px;width:100px;text-align:center;top:430.00px;font-size:4.75px;color:#3D4B63;font-weight:400;">0m</div>
<div class="r" style="left:482.8px;top:290px;width:13px;height:155px;background:#fff"></div>
<div class="r" style="left:484px;top:291.7px;width:2.8px;height:99.3px;background:#C2C2C2;border-radius:1.4px"></div>
<div class="r" style="left:17px;top:434.8px;width:390.6px;height:10px;background:#BFBFBF;border-radius:5px"></div>
<svg class="a" style="left:509.70px;top:259.00px" width="3.2" height="4.4" viewBox="0 0 3.2 4.4"><rect x="0" y="0" width="3.2" height="4.4" fill="#E3E4EC"/><rect x="0.3" y="0.2" width="0.9" height="4" fill="#BEC2D2"/><rect x="2" y="0.2" width="0.9" height="4" fill="#BEC2D2"/></svg>
<div class="a" style="left:516.80px;top:259.00px;font-size:5.4px;color:#172B4D;font-weight:400;">Time in Status Per Date. Current month</div>
<svg class="a" style="left:943.80px;top:258.30px" width="40" height="6" viewBox="0 0 40 6"><path d="M0.4,5.6 L0.6,3.2 L2.8,5.4 Z M5.6,0.4 L5.4,2.8 L3.2,0.6 Z" fill="#172B4D"/><path d="M1.6,4.4 L2.4,3.6 M3.6,2.4 L4.4,1.6" stroke="#172B4D" stroke-width="0.7" fill="none"/><g stroke="#172B4D" stroke-width="0.75" fill="none"><path d="M11.200000000000001,2.2 L11.200000000000001,0.4 L13.0,0.4 M14.600000000000001,0.4 L16.4,0.4 L16.4,2.2 M16.4,3.8 L16.4,5.6 L14.600000000000001,5.6 M13.0,5.6 L11.200000000000001,5.6 L11.200000000000001,3.8"/></g><g stroke="#172B4D" stroke-width="0.75" fill="none"><path d="M23.599999999999998,0.8 C21.799999999999997,1.2 21.599999999999998,4.2 23.0,5.2 M25.2,5.2 C27.0,4.8 27.2,1.8 25.799999999999997,0.8"/></g><path d="M22.799999999999997,0 L24.299999999999997,0.9 L22.799999999999997,1.9 Z M26.0,4.1 L24.5,5.1 L26.0,6 Z" fill="#172B4D"/><path d="M31.6,3.1 h4.6 v0.65 h-4.6 Z" fill="#172B4D"/></svg>
<div class="a" style="left:509.70px;top:278.00px;font-size:4.5px;color:#626F86;font-weight:400;;transform:scaleX(0.873);transform-origin:0 0">Updated 3 minutes ago</div>
<div class="r" style="left:909.8px;top:273.9px;width:29.3px;height:10.4px;background:#F3F2F7;border-radius:1.5px"></div><div class="r" style="left:941.7px;top:273.9px;width:38.1px;height:10.4px;background:#F3F2F7;border-radius:1.5px"></div><svg class="a" style="left:913.40px;top:275.70px" width="8" height="7" viewBox="0 0 8 7"><path d="M2.4,5.1 H1.9 C1,5.1 0.4,4.4 0.4,3.6 C0.4,2.8 1,2.1 1.9,2.1 C2.2,1 3,0.4 4.1,0.4 C5.3,0.4 6.2,1.2 6.3,2.3 C7.1,2.4 7.6,3 7.6,3.7 C7.6,4.5 7,5.1 6.2,5.1 H5.7" fill="none" stroke="#2C3E5D" stroke-width="0.75"/><path d="M4,2.6 V6.5 M2.9,5.4 L4,6.5 L5.1,5.4" fill="none" stroke="#2C3E5D" stroke-width="0.75"/></svg><div class="a" style="left:923.40px;top:278.00px;font-size:4.6px;color:#44546F;font-weight:400;">Export</div><svg class="a" style="left:944.50px;top:276.20px" width="7" height="6" viewBox="0 0 7 6"><rect x="0.4" y="0.4" width="6.2" height="5.2" rx="0.8" fill="none" stroke="#44546F" stroke-width="0.75"/><path d="M2.5,0.5 V5.5 M4.5,0.5 V5.5" stroke="#44546F" stroke-width="0.75"/></svg><div class="a" style="left:953.60px;top:278.00px;font-size:4.6px;color:#44546F;font-weight:400;">Columns</div><svg class="a" style="left:974.20px;top:277.90px" width="3" height="2" viewBox="0 0 3 2"><path d="M0.2,0.2 L1.5,1.6 L2.8,0.2 Z" fill="#44546F"/></svg>
<div class="r" style="left:509.7px;top:290.2px;width:470.1px;height:10.8px;background:#F2F0F6"></div>
<div class="r" style="left:509.7px;top:290.2px;width:99.6px;height:10.8px;background:#DCDEE2"></div>
<div class="r" style="left:509.7px;top:301px;width:99.6px;height:118.1px;background:#DDF7DF"></div>
<div class="r" style="left:509.7px;top:360.05px;width:99.6px;height:23.62px;background:#F4E8E6"></div>
<svg class="a" style="left:509.7px;top:360.05px" width="99.6" height="23.62"><defs><pattern id="tx" width="7" height="4" patternUnits="userSpaceOnUse" patternTransform="rotate(-20)"><path d="M0,2 C1.5,0.8 2.5,3.2 4,2 C5,1.2 6,2.6 7,2" fill="none" stroke="#FBF6F3" stroke-width="0.7"/></pattern></defs><rect width="100%" height="100%" fill="url(#tx)"/></svg>
<div class="r" style="left:609.3px;top:301px;width:110.6px;height:118.1px;background:#F7F2F7"></div>
<div class="r" style="left:509.7px;top:312.56px;width:470.1px;height:0.5px;background:#EFEBF0"></div>
<div class="r" style="left:509.7px;top:312.56px;width:210.2px;height:0.5px;background:#FFFFFF;opacity:0.8"></div>
<div class="r" style="left:509.7px;top:324.37px;width:470.1px;height:0.5px;background:#EFEBF0"></div>
<div class="r" style="left:509.7px;top:324.37px;width:210.2px;height:0.5px;background:#FFFFFF;opacity:0.8"></div>
<div class="r" style="left:509.7px;top:336.18px;width:470.1px;height:0.5px;background:#EFEBF0"></div>
<div class="r" style="left:509.7px;top:336.18px;width:210.2px;height:0.5px;background:#FFFFFF;opacity:0.8"></div>
<div class="r" style="left:509.7px;top:347.99px;width:470.1px;height:0.5px;background:#EFEBF0"></div>
<div class="r" style="left:509.7px;top:347.99px;width:210.2px;height:0.5px;background:#FFFFFF;opacity:0.8"></div>
<div class="r" style="left:509.7px;top:359.80px;width:470.1px;height:0.5px;background:#EFEBF0"></div>
<div class="r" style="left:509.7px;top:359.80px;width:210.2px;height:0.5px;background:#FFFFFF;opacity:0.8"></div>
<div class="r" style="left:509.7px;top:383.42px;width:470.1px;height:0.5px;background:#EFEBF0"></div>
<div class="r" style="left:509.7px;top:383.42px;width:210.2px;height:0.5px;background:#FFFFFF;opacity:0.8"></div>
<div class="r" style="left:509.7px;top:395.23px;width:470.1px;height:0.5px;background:#EFEBF0"></div>
<div class="r" style="left:509.7px;top:395.23px;width:210.2px;height:0.5px;background:#FFFFFF;opacity:0.8"></div>
<div class="r" style="left:509.7px;top:407.04px;width:470.1px;height:0.5px;background:#EFEBF0"></div>
<div class="r" style="left:509.7px;top:407.04px;width:210.2px;height:0.5px;background:#FFFFFF;opacity:0.8"></div>
<div class="r" style="left:509.7px;top:418.85px;width:470.1px;height:0.5px;background:#EFEBF0"></div>
<div class="r" style="left:509.7px;top:418.85px;width:210.2px;height:0.5px;background:#FFFFFF;opacity:0.8"></div>
<div class="a" style="left:513.20px;top:294.00px;font-size:4.5px;color:#2C3E5D;font-weight:400;;transform:scaleX(0.875);transform-origin:0 0">Date/Period</div>
<svg class="a" style="left:612px;top:294px" width="4" height="3.2" viewBox="0 0 4 3.2"><path d="M0,0.2 h3.8 v1 h-3.8 Z M0,2 h3.8 v1 h-3.8 Z" fill="#7A808C"/></svg>
<div class="a" style="left:616.80px;top:294.00px;font-size:4.5px;color:#2C3E5D;font-weight:400;;transform:scaleX(0.875);transform-origin:0 0">Cycle Time</div>
<svg class="a" style="left:665.7px;top:293.80px" width="3.4" height="3" viewBox="0 0 3.4 3"><path d="M0,0.2 h1.3 v1.1 h-1.3 Z M2,0.2 h1.3 v1.1 h-1.3 Z M0,1.7 h1.3 v1.1 h-1.3 Z M2,1.7 h1.3 v1.1 h-1.3 Z" fill="#44546F"/></svg>
<div class="a" style="left:669.70px;top:294.00px;font-size:4.5px;color:#2C3E5D;font-weight:400;;transform:scaleX(0.875);transform-origin:0 0">Lead Time</div>
<div class="a" style="left:723.40px;top:294.00px;font-size:4.5px;color:#2C3E5D;font-weight:400;;transform:scaleX(0.875);transform-origin:0 0">On hold</div>
<div class="a" style="left:765.90px;top:294.00px;font-size:4.5px;color:#2C3E5D;font-weight:400;;transform:scaleX(0.875);transform-origin:0 0">To Do</div>
<div class="a" style="left:823.50px;top:294.00px;font-size:4.5px;color:#2C3E5D;font-weight:400;;transform:scaleX(0.875);transform-origin:0 0">In Progress</div>
<div class="a" style="left:876.90px;top:294.00px;font-size:4.5px;color:#2C3E5D;font-weight:400;;transform:scaleX(0.875);transform-origin:0 0">To Review</div>
<div class="a" style="left:925.40px;top:294.00px;font-size:4.5px;color:#2C3E5D;font-weight:400;;transform:scaleX(0.875);transform-origin:0 0">Done</div>
<div class="a" style="left:513.20px;top:306.00px;font-size:4.9px;color:#3D4B63;font-weight:400;">1/Jan/24</div>
<div class="a" style="left:586.90px;width:100px;text-align:center;top:306.00px;font-size:4.62px;color:#3D4B63;font-weight:400;">0m</div>
<div class="a" style="left:642.20px;width:100px;text-align:center;top:306.00px;font-size:4.62px;color:#3D4B63;font-weight:400;">13d 8h</div>
<div class="a" style="left:691.00px;width:100px;text-align:center;top:306.00px;font-size:4.62px;color:#3D4B63;font-weight:400;">0m</div>
<div class="a" style="left:741.00px;width:100px;text-align:center;top:306.00px;font-size:4.62px;color:#3D4B63;font-weight:400;">13d 8h</div>
<div class="a" style="left:796.50px;width:100px;text-align:center;top:306.00px;font-size:4.62px;color:#3D4B63;font-weight:400;">0m</div>
<div class="a" style="left:847.50px;width:100px;text-align:center;top:306.00px;font-size:4.62px;color:#3D4B63;font-weight:400;">0m</div>
<div class="a" style="left:900.80px;width:100px;text-align:center;top:306.00px;font-size:4.62px;color:#3D4B63;font-weight:400;">0m</div>
<div class="a" style="left:513.20px;top:318.00px;font-size:4.9px;color:#3D4B63;font-weight:400;">2/Jan/24</div>
<div class="a" style="left:586.90px;width:100px;text-align:center;top:318.00px;font-size:4.62px;color:#3D4B63;font-weight:400;">1d 7h 11m</div>
<div class="a" style="left:642.20px;width:100px;text-align:center;top:318.00px;font-size:4.62px;color:#3D4B63;font-weight:400;">13d 10h 10m</div>
<div class="a" style="left:691.00px;width:100px;text-align:center;top:318.00px;font-size:4.62px;color:#3D4B63;font-weight:400;">0m</div>
<div class="a" style="left:741.00px;width:100px;text-align:center;top:318.00px;font-size:4.62px;color:#3D4B63;font-weight:400;">10d 11h 50m</div>
<div class="a" style="left:796.50px;width:100px;text-align:center;top:318.00px;font-size:4.62px;color:#3D4B63;font-weight:400;">1d 7h 11m</div>
<div class="a" style="left:847.50px;width:100px;text-align:center;top:318.00px;font-size:4.62px;color:#3D4B63;font-weight:400;">13h 50m</div>
<div class="a" style="left:900.80px;width:100px;text-align:center;top:318.00px;font-size:4.62px;color:#3D4B63;font-weight:400;">1d 15h 9m</div>
<div class="a" style="left:513.20px;top:330.00px;font-size:4.9px;color:#3D4B63;font-weight:400;">3/Jan/24</div>
<div class="a" style="left:586.90px;width:100px;text-align:center;top:330.00px;font-size:4.62px;color:#3D4B63;font-weight:400;">2d 15h 52m</div>
<div class="a" style="left:642.20px;width:100px;text-align:center;top:330.00px;font-size:4.62px;color:#3D4B63;font-weight:400;">16d 3h 34m</div>
<div class="a" style="left:691.00px;width:100px;text-align:center;top:330.00px;font-size:4.62px;color:#3D4B63;font-weight:400;">0m</div>
<div class="a" style="left:741.00px;width:100px;text-align:center;top:330.00px;font-size:4.62px;color:#3D4B63;font-weight:400;">9d 11h 41m</div>
<div class="a" style="left:796.50px;width:100px;text-align:center;top:330.00px;font-size:4.62px;color:#3D4B63;font-weight:400;">2d 15h 52m</div>
<div class="a" style="left:847.50px;width:100px;text-align:center;top:330.00px;font-size:4.62px;color:#3D4B63;font-weight:400;">8h</div>
<div class="a" style="left:900.80px;width:100px;text-align:center;top:330.00px;font-size:4.62px;color:#3D4B63;font-weight:400;">4d</div>
<div class="a" style="left:513.20px;top:342.00px;font-size:4.9px;color:#3D4B63;font-weight:400;">4/Jan/24</div>
<div class="a" style="left:586.90px;width:100px;text-align:center;top:342.00px;font-size:4.62px;color:#3D4B63;font-weight:400;">2d 22h 10m</div>
<div class="a" style="left:642.20px;width:100px;text-align:center;top:342.00px;font-size:4.62px;color:#3D4B63;font-weight:400;">21d 16h 41m</div>
<div class="a" style="left:691.00px;width:100px;text-align:center;top:342.00px;font-size:4.62px;color:#3D4B63;font-weight:400;">0m</div>
<div class="a" style="left:741.00px;width:100px;text-align:center;top:342.00px;font-size:4.62px;color:#3D4B63;font-weight:400;">14d 1h 38m</div>
<div class="a" style="left:796.50px;width:100px;text-align:center;top:342.00px;font-size:4.62px;color:#3D4B63;font-weight:400;">2d 22h 10m</div>
<div class="a" style="left:847.50px;width:100px;text-align:center;top:342.00px;font-size:4.62px;color:#3D4B63;font-weight:400;">8h</div>
<div class="a" style="left:900.80px;width:100px;text-align:center;top:342.00px;font-size:4.62px;color:#3D4B63;font-weight:400;">4d 16h 52m</div>
<div class="a" style="left:513.20px;top:353.00px;font-size:4.9px;color:#3D4B63;font-weight:400;">5/Jan/24</div>
<div class="a" style="left:586.90px;width:100px;text-align:center;top:353.00px;font-size:4.62px;color:#3D4B63;font-weight:400;">4d 1h 34m</div>
<div class="a" style="left:642.20px;width:100px;text-align:center;top:353.00px;font-size:4.62px;color:#3D4B63;font-weight:400;">23d 18h 55m</div>
<div class="a" style="left:691.00px;width:100px;text-align:center;top:353.00px;font-size:4.62px;color:#3D4B63;font-weight:400;">8h</div>
<div class="a" style="left:741.00px;width:100px;text-align:center;top:353.00px;font-size:4.62px;color:#3D4B63;font-weight:400;">13d 10m</div>
<div class="a" style="left:796.50px;width:100px;text-align:center;top:353.00px;font-size:4.62px;color:#3D4B63;font-weight:400;">4d 1h 34m</div>
<div class="a" style="left:847.50px;width:100px;text-align:center;top:353.00px;font-size:4.62px;color:#3D4B63;font-weight:400;">8h</div>
<div class="a" style="left:900.80px;width:100px;text-align:center;top:353.00px;font-size:4.62px;color:#3D4B63;font-weight:400;">6d 17h 10m</div>
<div class="a" style="left:513.20px;top:365.00px;font-size:4.9px;color:#3D4B63;font-weight:400;">6/Jan/24</div>
<div class="a" style="left:586.90px;width:100px;text-align:center;top:365.00px;font-size:4.62px;color:#3D4B63;font-weight:400;">0m</div>
<div class="a" style="left:642.20px;width:100px;text-align:center;top:365.00px;font-size:4.62px;color:#3D4B63;font-weight:400;">0m</div>
<div class="a" style="left:691.00px;width:100px;text-align:center;top:365.00px;font-size:4.62px;color:#3D4B63;font-weight:400;">0m</div>
<div class="a" style="left:741.00px;width:100px;text-align:center;top:365.00px;font-size:4.62px;color:#3D4B63;font-weight:400;">0m</div>
<div class="a" style="left:796.50px;width:100px;text-align:center;top:365.00px;font-size:4.62px;color:#3D4B63;font-weight:400;">0m</div>
<div class="a" style="left:847.50px;width:100px;text-align:center;top:365.00px;font-size:4.62px;color:#3D4B63;font-weight:400;">0m</div>
<div class="a" style="left:900.80px;width:100px;text-align:center;top:365.00px;font-size:4.62px;color:#3D4B63;font-weight:400;">0m</div>
<div class="a" style="left:513.20px;top:377.00px;font-size:4.9px;color:#3D4B63;font-weight:400;">7/Jan/24</div>
<div class="a" style="left:586.90px;width:100px;text-align:center;top:377.00px;font-size:4.62px;color:#3D4B63;font-weight:400;">0m</div>
<div class="a" style="left:642.20px;width:100px;text-align:center;top:377.00px;font-size:4.62px;color:#3D4B63;font-weight:400;">0m</div>
<div class="a" style="left:691.00px;width:100px;text-align:center;top:377.00px;font-size:4.62px;color:#3D4B63;font-weight:400;">0m</div>
<div class="a" style="left:741.00px;width:100px;text-align:center;top:377.00px;font-size:4.62px;color:#3D4B63;font-weight:400;">0m</div>
<div class="a" style="left:796.50px;width:100px;text-align:center;top:377.00px;font-size:4.62px;color:#3D4B63;font-weight:400;">0m</div>
<div class="a" style="left:847.50px;width:100px;text-align:center;top:377.00px;font-size:4.62px;color:#3D4B63;font-weight:400;">0m</div>
<div class="a" style="left:900.80px;width:100px;text-align:center;top:377.00px;font-size:4.62px;color:#3D4B63;font-weight:400;">0m</div>
<div class="a" style="left:513.20px;top:389.00px;font-size:4.9px;color:#3D4B63;font-weight:400;">8/Jan/24</div>
<div class="a" style="left:586.90px;width:100px;text-align:center;top:389.00px;font-size:4.62px;color:#3D4B63;font-weight:400;">2d 20h 28m</div>
<div class="a" style="left:642.20px;width:100px;text-align:center;top:389.00px;font-size:4.62px;color:#3D4B63;font-weight:400;">40d 4h 32m</div>
<div class="a" style="left:691.00px;width:100px;text-align:center;top:389.00px;font-size:4.62px;color:#3D4B63;font-weight:400;">8h</div>
<div class="a" style="left:741.00px;width:100px;text-align:center;top:389.00px;font-size:4.62px;color:#3D4B63;font-weight:400;">22d 8h 21m</div>
<div class="a" style="left:796.50px;width:100px;text-align:center;top:389.00px;font-size:4.62px;color:#3D4B63;font-weight:400;">2d 20h 28m</div>
<div class="a" style="left:847.50px;width:100px;text-align:center;top:389.00px;font-size:4.62px;color:#3D4B63;font-weight:400;">8h</div>
<div class="a" style="left:900.80px;width:100px;text-align:center;top:389.00px;font-size:4.62px;color:#3D4B63;font-weight:400;">14d 23h 42m</div>
<div class="a" style="left:513.20px;top:401.00px;font-size:4.9px;color:#3D4B63;font-weight:400;">9/Jan/24</div>
<div class="a" style="left:586.90px;width:100px;text-align:center;top:401.00px;font-size:4.62px;color:#3D4B63;font-weight:400;">3d 1h 55m</div>
<div class="a" style="left:642.20px;width:100px;text-align:center;top:401.00px;font-size:4.62px;color:#3D4B63;font-weight:400;">55d 10h 43m</div>
<div class="a" style="left:691.00px;width:100px;text-align:center;top:401.00px;font-size:4.62px;color:#3D4B63;font-weight:400;">8h</div>
<div class="a" style="left:741.00px;width:100px;text-align:center;top:401.00px;font-size:4.62px;color:#3D4B63;font-weight:400;">34d 12h 22m</div>
<div class="a" style="left:796.50px;width:100px;text-align:center;top:401.00px;font-size:4.62px;color:#3D4B63;font-weight:400;">3d 1h 55m</div>
<div class="a" style="left:847.50px;width:100px;text-align:center;top:401.00px;font-size:4.62px;color:#3D4B63;font-weight:400;">12h 28m</div>
<div class="a" style="left:900.80px;width:100px;text-align:center;top:401.00px;font-size:4.62px;color:#3D4B63;font-weight:400;">17d 20h 26m</div>
<div class="a" style="left:513.20px;top:412.00px;font-size:4.9px;color:#3D4B63;font-weight:400;">10/Jan/24</div>
<div class="a" style="left:586.90px;width:100px;text-align:center;top:412.00px;font-size:4.62px;color:#3D4B63;font-weight:400;">2d 17h 1m</div>
<div class="a" style="left:642.20px;width:100px;text-align:center;top:412.00px;font-size:4.62px;color:#3D4B63;font-weight:400;">62d 1h 42m</div>
<div class="a" style="left:691.00px;width:100px;text-align:center;top:412.00px;font-size:4.62px;color:#3D4B63;font-weight:400;">13h 26m</div>
<div class="a" style="left:741.00px;width:100px;text-align:center;top:412.00px;font-size:4.62px;color:#3D4B63;font-weight:400;">40d 2h 46m</div>
<div class="a" style="left:796.50px;width:100px;text-align:center;top:412.00px;font-size:4.62px;color:#3D4B63;font-weight:400;">2d 17h 1m</div>
<div class="a" style="left:847.50px;width:100px;text-align:center;top:412.00px;font-size:4.62px;color:#3D4B63;font-weight:400;">1d 1h 31m</div>
<div class="a" style="left:900.80px;width:100px;text-align:center;top:412.00px;font-size:4.62px;color:#3D4B63;font-weight:400;">19d 5h 54m</div>
</body></html>
